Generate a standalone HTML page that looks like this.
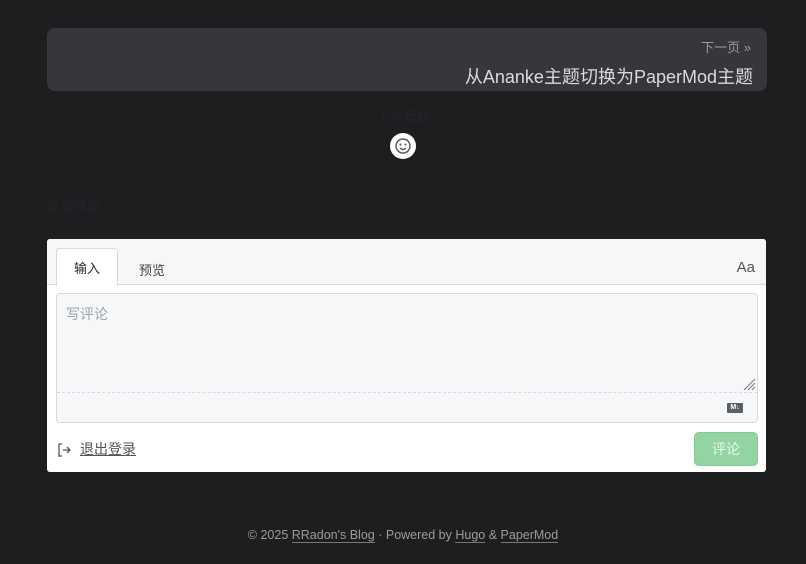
<!DOCTYPE html>
<html><head><meta charset="utf-8"><style>
body{margin:0;width:806px;height:564px;background:#1d1e20;font-family:"Liberation Sans","Noto Sans CJK SC",sans-serif;position:relative;overflow:hidden}
.nav{position:absolute;left:47px;top:28px;width:720px;height:63px;background:#36373b;border-radius:8px}
.nav .n{position:absolute;right:16px;top:9px;font-size:13px;color:#9a9b9e}
.nav .t{position:absolute;right:14px;top:35px;font-size:18px;color:#dadadb}
.faint{position:absolute;color:#252629;font-size:13px}
.emo{position:absolute;left:390px;top:133px;width:26px;height:26px;border-radius:50%;background:#fff}
.box{position:absolute;left:47px;top:239px;width:719px;height:233px;background:#fff;border-radius:3px}
.tabs{position:absolute;left:0;top:0;width:719px;height:45px;background:#f6f7f9;border-bottom:1px solid #d8dadd;border-radius:3px 3px 0 0}
.tab1{position:absolute;left:9px;top:9px;width:60px;height:37px;background:#fff;border:1px solid #d8dadd;border-bottom:none;border-radius:3px 3px 0 0;font-size:13px;color:#24292e;text-align:center;line-height:40px}
.tab2{position:absolute;left:92px;top:21px;font-size:13px;color:#444}
.aa{position:absolute;right:11px;top:20px;font-size:15px;color:#555}
.ta{position:absolute;left:9px;top:54px;width:700px;height:128px;background:#f6f7f9;border:1px solid #d8dadd;border-radius:4px}
.ta .ph{position:absolute;left:9px;top:10px;font-size:14px;color:#9ea3a8}
.ta .dash{position:absolute;left:0;right:0;top:98px;border-top:1px dashed #d8dadd}
.md{position:absolute;right:14px;top:109px;width:16px;height:10px;background:#5c5f63;border-radius:1px;color:#fff;font-size:7px;font-weight:bold;line-height:10px;text-align:center}
.out{position:absolute;left:33px;top:200px;font-size:14px;color:#555;text-decoration:underline}
.btn{position:absolute;right:8px;top:193px;width:62px;height:32px;background:#94d3a2;border:1px solid #86c795;border-radius:5px;color:#eaf6ec;font-size:14px;text-align:center;line-height:32px}
.foot{position:absolute;left:0;width:806px;top:528px;text-align:center;font-size:12.5px;color:#9b9c9e}
.foot u{text-decoration:none;border-bottom:1px solid #777}
</style></head><body>
<div class="nav"><div class="n">下一页 »</div><div class="t">从Ananke主题切换为PaperMod主题</div></div>
<div class="faint" style="left:380px;top:106px">1 个反应</div>
<div class="emo"><svg width="26" height="26" viewBox="0 0 26 26"><circle cx="13" cy="13" r="7" fill="none" stroke="#555" stroke-width="1.4"/><circle cx="10.5" cy="11.5" r="1" fill="#555"/><circle cx="15.5" cy="11.5" r="1" fill="#555"/><path d="M10 15q3 3 6 0" fill="none" stroke="#555" stroke-width="1.3"/></svg></div>
<div class="faint" style="left:50px;top:197px">0 条评论</div>
<div class="box">
<div class="tabs"><div class="tab1">输入</div><div class="tab2">预览</div><div class="aa">Aa</div></div>
<div class="ta"><div class="ph">写评论</div>
<svg style="position:absolute;right:1px;top:83px" width="14" height="14"><path d="M2 13L13 2M6 13L13 6M10 13L13 10" stroke="#777" stroke-width="1"/></svg>
<div class="dash"></div><div class="md">M↓</div></div>
<svg style="position:absolute;left:10px;top:203px" width="16" height="16" viewBox="0 0 16 16"><path d="M5 2H2v12h3" fill="none" stroke="#555" stroke-width="1.3"/><path d="M6 8h7M10 5l3 3-3 3" fill="none" stroke="#555" stroke-width="1.3"/></svg>
<div class="out">退出登录</div>
<div class="btn">评论</div>
</div>
<div class="foot">© 2025 <u>RRadon's Blog</u> · Powered by <u>Hugo</u> &amp; <u>PaperMod</u></div>
</body></html>
